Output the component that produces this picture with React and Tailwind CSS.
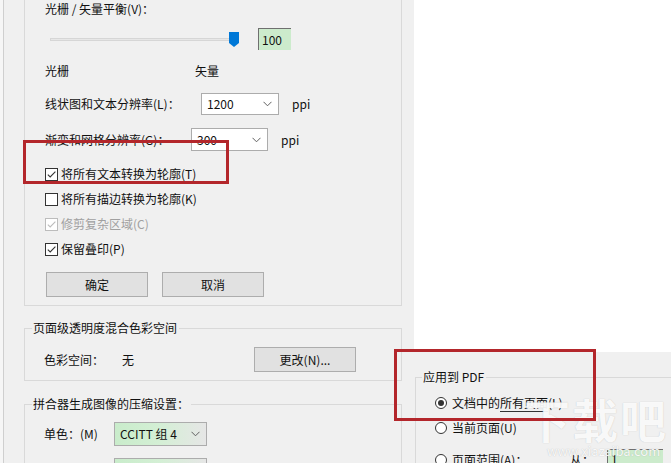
import React from "react";

function Chevron({ color = "#606060" }) {
  return (
    <svg width="9" height="6" viewBox="0 0 9 6" className="shrink-0">
      <path d="M0.5 0.8 L4.5 4.8 L8.5 0.8" fill="none" stroke={color} strokeWidth="1" />
    </svg>
  );
}

function Select({ value, w, h = 22, green = false }) {
  return (
    <div
      className={`flex items-center justify-between border border-[#acacac] pl-[5px] pr-[6px] ${
        green ? "bg-gradient-to-r from-[#c9eccb] via-[#d4efd5] to-[#e6e6e6]" : "bg-white"
      }`}
      style={{ width: w, height: h }}
    >
      <span>{value}</span>
      <Chevron />
    </div>
  );
}

function Checkbox({ checked, disabled, label }) {
  const c = disabled ? "#bcbcbc" : "#333333";
  return (
    <div className="flex h-[18px] items-center">
      <div
        className={`flex h-[13px] w-[13px] items-center justify-center border bg-white ${
          disabled ? "border-[#bcbcbc]" : "border-[#333333]"
        }`}
      >
        {checked && (
          <svg width="11" height="11" viewBox="0 0 11 11">
            <polyline points="1.8,5.6 4.2,8 9.4,2.6" fill="none" stroke={c} strokeWidth="1.1" />
          </svg>
        )}
      </div>
      <span className={`ml-[3px] ${disabled ? "text-[#a0a0a0]" : ""}`}>{label}</span>
    </div>
  );
}

function Radio({ checked }) {
  return (
    <div className="flex h-[12px] w-[12px] shrink-0 items-center justify-center rounded-full border border-[#333333] bg-white">
      {checked && <div className="h-[6px] w-[6px] rounded-full bg-[#333333]" />}
    </div>
  );
}

function Button({ children, w = 102 }) {
  return (
    <div
      className="flex h-[25px] items-center justify-center border border-[#adadad] bg-[#e1e1e1]"
      style={{ width: w }}
    >
      {children}
    </div>
  );
}

export default function App() {
  return (
    <div className="relative flex h-[463px] w-[671px] overflow-hidden bg-white font-['Noto_Sans_CJK_SC',sans-serif] text-[12px] leading-[18px] text-[#111111]">
      {/* left edge of another window */}
      <div className="h-full w-[4px] border-r border-[#cfcfcf] bg-[#f6f6f6]" />

      {/* main dialog panel */}
      <div className="h-full w-[410px] bg-[#f0f0f0] pl-[20px] pr-[12px]">
        {/* group 1 (top cut off) */}
        <div className="border-x border-b border-[#d9d9d9] pb-[8px] pl-[20px]">
          <div className="h-[18px]">光栅 / 矢量平衡(V)：</div>

          <div className="mt-[10px] flex h-[22px] items-center">
            <div className="relative ml-[5px] h-[22px] w-[190px]">
              <div className="absolute left-0 top-[10px] h-[3px] w-[183px] border border-[#d6d6d6] bg-[#e7e7e7]" />
              <svg className="absolute left-[179px] top-[4px]" width="10" height="15" viewBox="0 0 10 15">
                <polygon points="0,0 10,0 10,11 5,15 0,11" fill="#0078d7" />
              </svg>
            </div>
            <div className="ml-[18px] flex h-[22px] w-[33px] items-center border-l border-t border-[#6f6f6f] border-b-[#e3e3e3] border-r-[#e3e3e3] bg-[#ccebcc] pl-[3px]">
              100
            </div>
          </div>

          <div className="mt-[12px] flex h-[18px] items-center">
            <span className="w-[150px]">光栅</span>
            <span>矢量</span>
          </div>

          <div className="mt-[13px] flex h-[22px] items-center">
            <span className="w-[156px]">线状图和文本分辨率(L)：</span>
            <Select value="1200" w={78} h={22} />
            <span className="ml-[13px]">ppi</span>
          </div>

          <div className="mt-[13px] flex h-[23px] items-center">
            <span className="w-[146px]">渐变和网格分辨率(G)：</span>
            <Select value="300" w={77} h={23} />
            <span className="ml-[13px]">ppi</span>
          </div>

          <div className="mt-[14px] flex flex-col gap-[7px]">
            <Checkbox checked label="将所有文本转换为轮廓(T)" />
            <Checkbox label="将所有描边转换为轮廓(K)" />
            <Checkbox checked disabled label="修剪复杂区域(C)" />
            <Checkbox checked label="保留叠印(P)" />
          </div>

          <div className="ml-[1px] mt-[14px] flex gap-[14px]">
            <Button>确定</Button>
            <Button>取消</Button>
          </div>
        </div>

        {/* group 2 */}
        <fieldset className="mt-[15px] border border-[#d9d9d9] pb-[8px] pl-[7px]">
          <legend className="pl-[1px] pr-[2px] leading-[14px]">页面级透明度混合色彩空间</legend>
          <div className="mt-[12px] flex h-[25px] items-center pl-[12px]">
            <span className="w-[78px]">色彩空间：</span>
            <span className="w-[132px]">无</span>
            <Button>更改(N)...</Button>
          </div>
        </fieldset>

        {/* group 3 */}
        <fieldset className="mt-[16px] border border-[#d9d9d9] pb-[8px] pl-[7px]">
          <legend className="pl-[1px] pr-[2px] leading-[14px]">拼合器生成图像的压缩设置：</legend>
          <div className="mt-[11px] flex h-[24px] items-center pl-[12px]">
            <span className="w-[70px]">单色：(M)</span>
            <Select value="CCITT 组 4" w={93} h={24} green />
          </div>
          <div className="mt-[12px] flex h-[24px] items-center pl-[12px]">
            <span className="w-[70px]">彩色：</span>
            <Select value="" w={93} h={24} green />
          </div>
        </fieldset>
      </div>

      <div className="h-full flex-1 bg-white" />

      {/* second, overlapping dialog window */}
      <div className="absolute bottom-0 left-[404px] right-0 top-[352px] bg-[#f0f0f0] pl-[11px] pt-[18px]">
        <fieldset className="w-[300px] border border-[#d9d9d9] pl-[6px]">
          <legend className="pl-[1px] pr-[2px] leading-[14px]">应用到 PDF</legend>
          <div className="pl-[13px]">
            <div className="mt-[10px] flex h-[18px] items-center gap-[5px]">
              <Radio checked />
              <span>
                文档中的<span className="border-b border-[#333333]">所有页面</span>(L)
              </span>
            </div>
            <div className="mt-[7px] flex h-[18px] items-center gap-[5px]">
              <Radio />
              <span>当前页面(U)</span>
            </div>
            <div className="mt-[12px] flex h-[22px] items-center">
              <Radio />
              <span className="ml-[5px] w-[118px]">页面范围(A)：</span>
              <span className="w-[37px]">从：</span>
              <div className="h-[22px] w-[56px] border-l border-t border-[#6f6f6f] bg-[#ccebcc] pl-[3px]">1</div>
            </div>
          </div>
        </fieldset>
      </div>

      {/* watermark */}
      <div className="pointer-events-none absolute left-[524px] top-[392px] text-[46px] font-bold leading-[52px] tracking-[2px] text-white/90 [text-shadow:0_0_1px_rgba(120,120,120,0.45)]">
        下载吧
      </div>
      <div className="pointer-events-none absolute left-[547px] top-[444px] text-[13px] leading-[14px] text-white/90 [text-shadow:0_0_1px_rgba(120,120,120,0.5)]">
        www.xiazaiba.com
      </div>

      {/* red annotation boxes */}
      <div className="pointer-events-none absolute left-[23px] top-[140px] h-[44px] w-[206px] border-[3px] border-[#b3262b]" />
      <div className="pointer-events-none absolute left-[394px] top-[349px] h-[72px] w-[202px] border-[3px] border-[#b3262b]" />
    </div>
  );
}
